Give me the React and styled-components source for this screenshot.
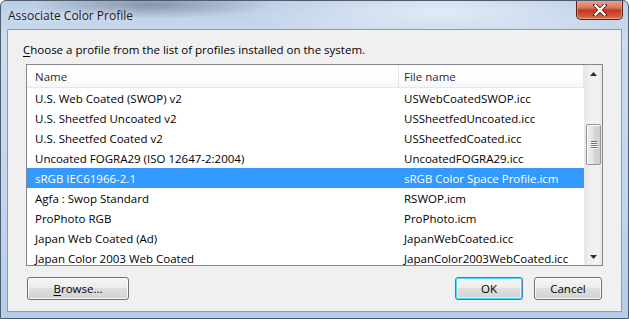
import React from "react";
import styled, { createGlobalStyle } from "styled-components";

const Global = createGlobalStyle`
  html, body { margin: 0; padding: 0; background: #fff; }
  body { font-family: "Open Sans", "Noto Sans", sans-serif; }
`;

const Frame = styled.div`
  width: 629px;
  height: 319px;
  box-sizing: border-box;
  display: flex;
  flex-direction: column;
  background:
    radial-gradient(ellipse 120px 14px at 150px 4px, rgba(70, 80, 100, 0.45), transparent),
    radial-gradient(ellipse 200px 30px at 440px 10px, rgba(255, 255, 255, 0.55), transparent),
    linear-gradient(180deg, #b9cde6 0%, #cddcee 12%, #c2d6ef 60%, #b5cdeb 100%);
  border: 1px solid #4e5c6e;
  border-radius: 6px 6px 0 0;
  overflow: hidden;
`;

const TitleBar = styled.div`
  height: 28px;
  display: flex;
  align-items: flex-start;
  justify-content: space-between;
  padding-left: 7px;
  flex-shrink: 0;
`;

const Title = styled.div`
  font-size: 12px;
  color: #1b1b1b;
  margin-top: 6px;
  text-shadow: 0 0 6px rgba(255, 255, 255, 0.9);
`;

const Close = styled.div`
  width: 47px;
  height: 20px;
  margin-right: 5px;
  margin-top: -1px;
  box-sizing: border-box;
  border: 1px solid #5a1f14;
  border-top: none;
  border-radius: 0 0 5px 5px;
  background: linear-gradient(180deg, #e9a898 0%, #d8775f 40%, #c0391d 55%, #cf5a3a 85%, #e07b5c 100%);
  box-shadow: inset 0 0 0 1px rgba(255, 200, 180, 0.45);
  display: flex;
  align-items: center;
  justify-content: center;
`;

const Client = styled.div`
  flex: 1;
  margin: 0 6px 6px 6px;
  background: #f0f0f0;
  border: 1px solid #8a9cb3;
  display: flex;
  flex-direction: column;
  padding: 12px 18px 11px 18px;
  box-sizing: border-box;
`;

const Label = styled.div`
  font-size: 11.5px;
  color: #000;
  margin-left: -3px;
  line-height: 16px;
  height: 18px;
`;

const U = styled.span`
  text-decoration: underline;
  text-underline-offset: 2px;
`;

const ListBox = styled.div`
  margin-top: 4px;
  height: 202px;
  flex-shrink: 0;
  box-sizing: border-box;
  border: 1px solid #828790;
  background: #fff;
  display: flex;
  overflow: hidden;
`;

const Columns = styled.div`
  flex: 1;
  display: flex;
  flex-direction: column;
  min-width: 0;
`;

const Header = styled.div`
  height: 23px;
  flex-shrink: 0;
  display: grid;
  grid-template-columns: 372px 1fr;
  border-bottom: 1px solid #e3e6ea;
  background: linear-gradient(180deg, #ffffff 0%, #ffffff 55%, #f6f7f9 100%);
  box-sizing: border-box;
`;

const HeadCell = styled.div`
  font-size: 11.5px;
  color: #1e2a3a;
  padding-left: ${(p) => p.$pad}px;
  display: flex;
  align-items: center;
  border-right: 1px solid #e3e6ea;
`;

const Row = styled.div`
  height: 20px;
  flex-shrink: 0;
  display: grid;
  grid-template-columns: 372px 1fr;
  background: ${(p) => (p.$sel ? "#3399ff" : "transparent")};
  color: ${(p) => (p.$sel ? "#fff" : "#000")};
`;

const Cell = styled.div`
  font-size: 11.5px;
  padding-left: ${(p) => p.$pad}px;
  display: flex;
  align-items: center;
  white-space: nowrap;
  overflow: hidden;
`;

const ScrollBar = styled.div`
  width: 17px;
  flex-shrink: 0;
  background: linear-gradient(90deg, #e3e3e3 0%, #f0f0f0 20%, #f2f2f2 80%, #e8e8e8 100%);
  border-left: 1px solid #eaeaea;
  display: flex;
  flex-direction: column;
  align-items: center;
`;

const Arrow = styled.div`
  height: 17px;
  width: 17px;
  flex-shrink: 0;
  display: flex;
  align-items: center;
  justify-content: center;
`;

const Track = styled.div`
  flex: 1;
  width: 100%;
  display: flex;
  flex-direction: column;
  align-items: center;
`;

const Thumb = styled.div`
  margin-top: 42px;
  width: 15px;
  height: 41px;
  box-sizing: border-box;
  border: 1px solid #979797;
  border-radius: 2px;
  background: linear-gradient(90deg, #eeeeee 0%, #e4e4e4 45%, #d6d6d6 55%, #cfcfcf 100%);
  box-shadow: inset 1px 1px 0 #fbfbfb;
  display: flex;
  flex-direction: column;
  align-items: center;
  justify-content: center;
  gap: 1px;
`;

const Grip = styled.div`
  width: 6px;
  height: 1px;
  background: #6f6f6f;
  box-shadow: 0 1px 0 #fafafa;
`;

const ButtonRow = styled.div`
  margin-top: 11px;
  display: flex;
  align-items: center;
  margin-left: 1px;
  margin-right: 1px;
`;

const Button = styled.button`
  width: ${(p) => p.$w}px;
  height: 23px;
  margin-left: ${(p) => p.$ml || 0}px;
  box-sizing: border-box;
  padding: 0;
  font-family: "Open Sans", "Noto Sans", sans-serif;
  font-size: 11.5px;
  color: #000;
  border: 1px solid ${(p) => (p.$default ? "#3c7fb1" : "#707070")};
  border-radius: 3px;
  background: linear-gradient(180deg, #f6f6f6 0%, #ececec 45%, #dedede 50%, #d2d2d2 100%);
  box-shadow: ${(p) =>
    p.$default
      ? "inset 0 0 0 1px #48d8fb, inset 0 0 0 2px rgba(255,255,255,0.5)"
      : "inset 0 0 0 1px rgba(255,255,255,0.8)"};
`;

const Spacer = styled.div`
  flex: 1;
`;

const rows = [
  ["U.S. Web Coated (SWOP) v2", "USWebCoatedSWOP.icc"],
  ["U.S. Sheetfed Uncoated v2", "USSheetfedUncoated.icc"],
  ["U.S. Sheetfed Coated v2", "USSheetfedCoated.icc"],
  ["Uncoated FOGRA29 (ISO 12647-2:2004)", "UncoatedFOGRA29.icc"],
  ["sRGB IEC61966-2.1", "sRGB Color Space Profile.icm", true],
  ["Agfa : Swop Standard", "RSWOP.icm"],
  ["ProPhoto RGB", "ProPhoto.icm"],
  ["Japan Web Coated (Ad)", "JapanWebCoated.icc"],
  ["Japan Color 2003 Web Coated", "JapanColor2003WebCoated.icc"],
];

export default function App() {
  return (
    <>
      <Global />
      <Frame>
        <TitleBar>
          <Title>Associate Color Profile</Title>
          <Close>
            <svg width="14" height="12" viewBox="0 0 14 12">
              <path d="M2 1 L12 11 M12 1 L2 11" stroke="#5b2014" strokeWidth="4" strokeLinecap="square" />
              <path d="M2.5 1.5 L11.5 10.5 M11.5 1.5 L2.5 10.5" stroke="#fff" strokeWidth="2.4" strokeLinecap="square" />
            </svg>
          </Close>
        </TitleBar>
        <Client>
          <Label>
            <U>C</U>hoose a profile from the list of profiles installed on the system.
          </Label>
          <ListBox>
            <Columns>
              <Header>
                <HeadCell $pad={8}>Name</HeadCell>
                <HeadCell $pad={5}>File name</HeadCell>
              </Header>
              {rows.map(([n, f, sel]) => (
                <Row key={n} $sel={sel}>
                  <Cell $pad={8}>{n}</Cell>
                  <Cell $pad={5}>{f}</Cell>
                </Row>
              ))}
            </Columns>
            <ScrollBar>
              <Arrow>
                <svg width="7" height="4" viewBox="0 0 7 4">
                  <path d="M0 4 L3.5 0 L7 4 Z" fill="#2c2c2c" />
                </svg>
              </Arrow>
              <Track>
                <Thumb>
                  <Grip />
                  <Grip />
                  <Grip />
                  <Grip />
                </Thumb>
              </Track>
              <Arrow>
                <svg width="7" height="4" viewBox="0 0 7 4">
                  <path d="M0 0 L7 0 L3.5 4 Z" fill="#2c2c2c" />
                </svg>
              </Arrow>
            </ScrollBar>
          </ListBox>
          <ButtonRow>
            <Button $w={102}>
              <U>B</U>rowse...
            </Button>
            <Spacer />
            <Button $w={68} $default>OK</Button>
            <Button $w={68} $ml={11}>Cancel</Button>
          </ButtonRow>
        </Client>
      </Frame>
    </>
  );
}
